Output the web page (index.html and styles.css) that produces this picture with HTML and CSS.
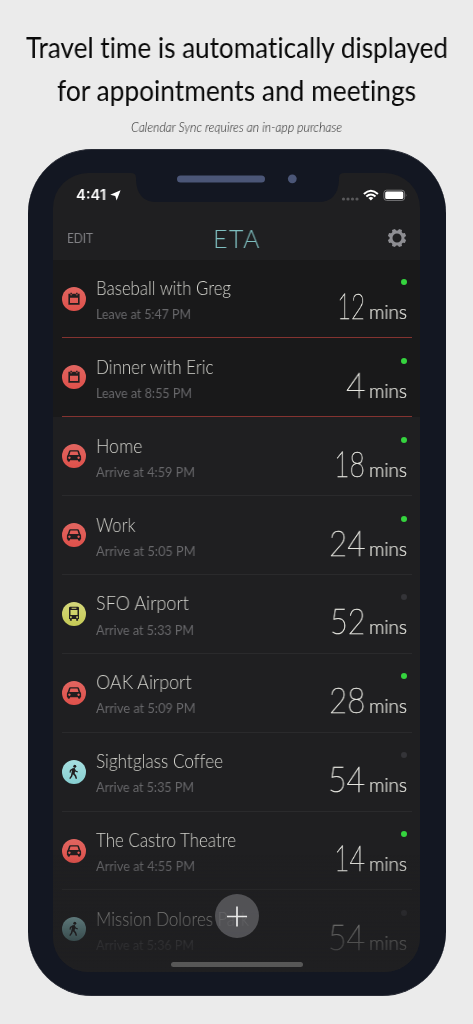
FILE: index.html
```html
<!DOCTYPE html>
<html lang="en">
<head>
<meta charset="utf-8">
<title>ETA</title>
<link rel="stylesheet" href="styles.css">
</head>
<body>
<svg class="sprite" aria-hidden="true">
  <symbol id="calendar" viewBox="0 0 24 24"><path fill-rule="evenodd" d="M6.4 6.7h2v1.5h1.7V6.7h3.8v1.5h1.7V6.7h2v11.1H6.4zM8 10.7v5.4h8v-5.4z"/><path d="M8.4 5.8h1.5v1.8H8.4zM14.1 5.8h1.5v1.8h-1.5z"/></symbol>
  <symbol id="car" viewBox="0 0 24 24"><path fill-rule="evenodd" d="M8.3 6.3h7.4q1 0 1.3 1l1.3 3.8q.8.6.8 1.6v3.500h-.7v.6q0 1-1.2 1t-1.2-1v-.6H8v.6q0 1-1.2 1t-1.2-1v-.6h-.7v-3.500q0-1 .8-1.600L7 7.300q.3-1 1.300-1zM8.500 7.600l-1.100 3.500h9.200l-1.100-3.500zM7.400 12.500a1.200 1.200 0 1 0 .01 0zM16.600 12.500a1.200 1.200 0 1 0 .01 0z"/></symbol>
  <symbol id="bus" viewBox="0 0 24 24"><path fill-rule="evenodd" d="M8.200 4.800h7.600q1.200 0 1.200 1.300v11h-.9v1.700h-1.900v-1.700H9.800v1.700H7.900v-1.700H7v-11q0-1.300 1.200-1.300zM9.600 5.800v1h4.800v-1zM8.500 7.900v5.200h7V7.900zM8.900 14.300a.9.9 0 1 0 .01 0zM15.100 14.300a.9.9 0 1 0 .01 0z"/></symbol>
  <symbol id="walk" viewBox="0 0 24 24"><circle cx="12.800" cy="6.200" r="1.500"/><path d="M10.600 8.200l2.100-.2 1.100 2.400 2.200 1.200-.5 1-2.500-1.200-.3 2.200 1.500 1.800.9 3-1.300.5-1.200-3-1.700-1.700-.7 2.300-1.900 2.500-1.100-.8 1.700-2.500.8-4 .3-1.500-1 .7-.4 1.900-1.100-.2.4-2.500z"/></symbol>
</svg>

<header class="promo">
  <h1><span data-fit="422">Travel time is automatically displayed</span><span data-fit="359">for appointments and meetings</span></h1>
  <p><span data-fit="211">Calendar Sync requires an in-app purchase</span></p>
</header>

<main class="phone">
  <div class="screen">
    <svg class="notch" viewBox="0 0 213 30"><path d="M0 0H213Q208 0 208 5V7Q207 29 187 29H26Q6 29 5 7V5Q5 0 0 0Z"/><rect class="speaker" x="46" y="2.500" width="88" height="7" rx="3.500"/><circle class="speaker" cx="161.300" cy="5.800" r="4.400"/></svg>
    <div class="status">
      <span class="clock" data-fit="30">4:41</span>
      <svg class="arrow" viewBox="0 0 11 11"><path d="M10.600.2L6.600 10.600 5.300 5.900.2 4.700z"/></svg>
      <svg class="signals" viewBox="0 0 68 14">
        <g fill="#59595b"><circle cx="3.500" cy="10" r="1.600"/><circle cx="8" cy="10" r="1.600"/><circle cx="12.500" cy="10" r="1.600"/><circle cx="17" cy="10" r="1.600"/></g>
        <g fill="none" stroke="#fff" stroke-width="2"><path d="M23.900 5Q30.900-1.500 37.900 5"/><path d="M26.300 7.600Q30.900 3.500 35.500 7.600"/></g><path fill="#fff" d="M28.400 9.100Q30.900 7.100 33.400 9.100L30.900 11.500z"/>
        <rect x="43.900" y="1.200" width="20.700" height="10.200" rx="2.700" fill="none" stroke="#777779"/><rect x="45.200" y="2.500" width="18.100" height="7.600" rx="1.500" fill="#fff"/><path d="M65.800 4.600q1.400 1.700 0 3.400z" fill="#777779"/>
      </svg>
    </div>
    <nav class="bar">
      <span class="edit" data-fit="26">EDIT</span>
      <span class="eta" data-fit="48">ETA</span>
      <svg class="gear" viewBox="-10 -10 20 20"><circle r="6"/><g><path id="t" d="M-2.300 -6L-1.600 -9.200H1.600L2.300 -6z" transform="rotate(22.500)"/><use href="#t" transform="rotate(45)"/><use href="#t" transform="rotate(90)"/><use href="#t" transform="rotate(135)"/><use href="#t" transform="rotate(180)"/><use href="#t" transform="rotate(225)"/><use href="#t" transform="rotate(270)"/><use href="#t" transform="rotate(315)"/></g></svg>
    </nav>
    <section class="list" id="list"></section>
    <div class="fade"></div>
    <svg class="add" viewBox="0 0 44 44"><circle cx="22" cy="22" r="22"/><path d="M12 22.500H32M22 12.500V32.500"/></svg>
    <div class="home"></div>
  </div>
</main>
<script src="app.js"></script>
</body>
</html>
```
FILE: styles.css
```css
* { box-sizing: border-box; }
body { margin: 0; width: 473px; height: 1024px; overflow: hidden; background: #ebebeb; font-family: Lato, "Open Sans", sans-serif; font-variant-ligatures: none; }
.sprite { position: absolute; width: 0; height: 0; }
[data-fit] { display: inline-block; white-space: nowrap; transform-origin: 0 50%; will-change: transform; }
.promo { height: 149px; padding-top: 25px; text-align: center; color: #090909; }
.promo h1 { margin: 0; font-size: 29px; line-height: 43px; font-weight: 400; display: flex; flex-direction: column; align-items: center; }
.promo p { margin: 5.500px 0 0; font-size: 13px; line-height: 20px; font-weight: 300; font-style: italic; color: #222; }
.phone { width: 418px; height: 847px; margin-left: 27.500px; padding: 24px 25.500px; border-radius: 64px; background: #131722; border: 0 solid #282b35; border-width: 1px 0; padding-top: 23px; }
.screen { position: relative; height: 799px; border-radius: 35px; overflow: hidden; background: #1f1f21; }
.notch { position: absolute; left: 77.500px; top: 0; width: 213px; height: 30px; fill: #131722; }
.notch .speaker { fill: #4b5677; }
.status { display: flex; height: 44px; padding: 13px 11px 0 23px; color: #fff; }
.clock { font: 600 14.500px/18px Inter, sans-serif; }
.arrow { width: 11px; height: 11px; margin: 4px 0 0 4px; fill: #fff; }
.signals { width: 68px; height: 14px; margin: 3px 1px 0 auto; }
.bar { display: grid; grid-template-columns: 1fr auto 1fr; align-items: center; height: 42.600px; padding: 0 13.500px 0 14px; }
.edit { justify-self: start; font-size: 13px; color: #828286; }
.eta { font-size: 26px; font-weight: 300; line-height: 30px; letter-spacing: 1.500px; color: #7fbfc0; }
.gear { width: 20px; height: 20px; justify-self: end; fill: #8e8e93; }
.gear circle { fill: none; stroke: #8e8e93; stroke-width: 3; }
.list { height: 712.400px; overflow: hidden; }
.row { display: flex; height: 78.850px; padding: 0 8px 0 9px; position: relative; }
.row::after { content: ""; position: absolute; z-index: 1; left: 9px; right: 8px; bottom: 0; height: 1px; background: #2a2a2c; }
.row.event { background: #19191a; }
.row.event::after { background: #843330; }
.badge { width: 24px; height: 24px; margin-top: 27px; border-radius: 50%; fill: #211e1f; }
.badge.calendar, .badge.car { background: linear-gradient(#e16560, #df514b); }
.badge.bus { background: linear-gradient(#d4d77b, #c5ca55); }
.badge.walk { background: linear-gradient(#a6dfe0, #87cfd1); }
.text { display: flex; flex-direction: column; align-items: flex-start; padding: 15.400px 0 0 10px; }
.name { font-size: 20px; line-height: 24px; font-weight: 300; color: #d2d2cc; }
.when { font-size: 13.200px; line-height: 18px; margin-top: 6.200px; font-weight: 400; color: #68686b; }
.time { margin-left: auto; display: flex; flex-direction: column; align-items: flex-end; padding: 19.400px 5px 0 0; color: #e5e5df; }
.dot { width: 6px; height: 6px; border-radius: 50%; background: #343438; }
.dot.live { background: #35d43e; }
.duration { display: flex; align-items: baseline; gap: 4px; line-height: 40px; }
.number { font-size: 35px; font-weight: 100; -webkit-text-stroke: .6px #e5e5df; }
.unit { font-size: 19.500px; font-weight: 300; -webkit-text-stroke: .2px #e5e5df; }
.fade { position: absolute; z-index: 2; inset: 682px 0 0; background: linear-gradient(#1f1f2100, #1f1f21ee 92%); }
.add { position: absolute; z-index: 3; left: 162px; top: 721px; width: 44px; height: 44px; fill: #5e5e62d0; stroke: none; }
.add path { stroke: #e8e8e8; stroke-width: 1.700; }
.home { position: absolute; z-index: 3; left: 118px; top: 789px; width: 131.500px; height: 4.500px; border-radius: 3px; background: #575757; }
```
FILE: app.js
```js
const trips = [
  ["calendar", "Baseball with Greg", 135, "Leave at 5:47 PM", 95, 12, 28, 1],
  ["calendar", "Dinner with Eric", 117.5, "Leave at 8:55 PM", 96, 4, 19.5, 1],
  ["car", "Home", 46.5, "Arrive at 4:59 PM", 99, 18, 31, 1],
  ["car", "Work", 39.5, "Arrive at 5:05 PM", 99.5, 24, 36.5, 1],
  ["bus", "SFO Airport", 93, "Arrive at 5:33 PM", 98, 52, 35.5, 0],
  ["car", "OAK Airport", 95.5, "Arrive at 5:09 PM", 99.5, 28, 36.5, 1],
  ["walk", "Sightglass Coffee", 127, "Arrive at 5:35 PM", 98, 54, 37, 0],
  ["car", "The Castro Theatre", 140, "Arrive at 4:55 PM", 99, 14, 31, 1],
  ["walk", "Mission Dolores Park", 153, "Arrive at 5:36 PM", 98, 54, 37, 0]
];
document.getElementById("list").innerHTML = trips.map(([icon, name, nw, when, ww, n, w, live]) => `
<article class="row ${icon === "calendar" ? "event" : ""}">
  <svg class="badge ${icon}"><use href="#${icon}"/></svg>
  <div class="text"><span class="name" data-fit="${nw}">${name}</span><span class="when" data-fit="${ww}">${when}</span></div>
  <div class="time"><i class="dot ${live ? "live" : ""}"></i><div class="duration"><span class="number" data-fit="${w}">${n}</span><span class="unit" data-fit="38">mins</span></div></div>
</article>`).join("");

// Condenses each label so that it fills its designed width.
document.querySelectorAll("[data-fit]").forEach(el => {
  const natural = el.getBoundingClientRect().width;
  const target = Number(el.dataset.fit);
  el.style.transform = `scaleX(${target / natural})`;
  el.style.marginRight = target - natural + "px";
});
```
